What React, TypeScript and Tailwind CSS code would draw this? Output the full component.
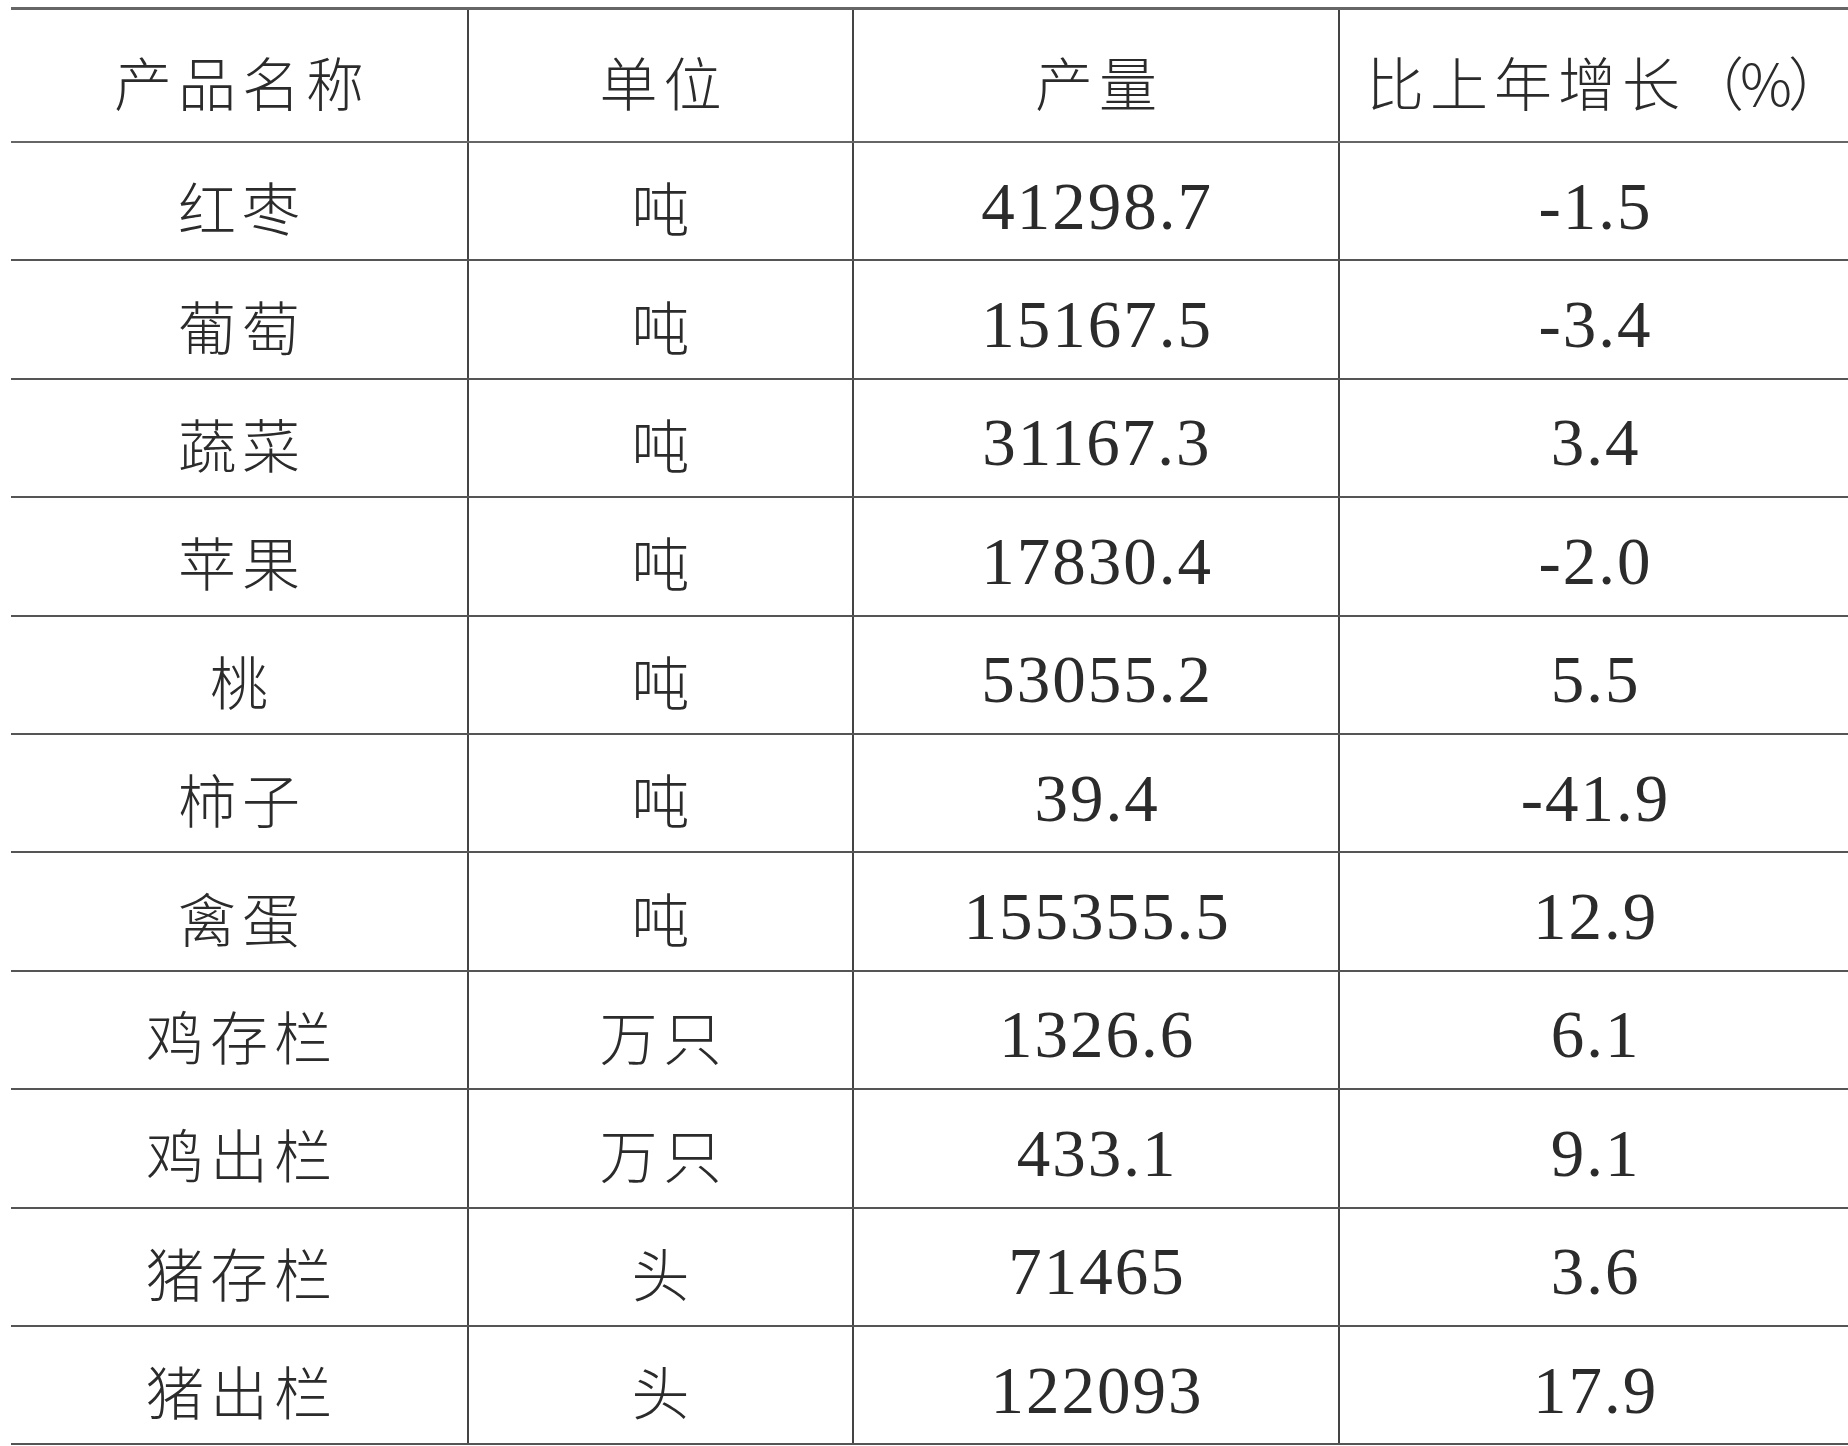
const rows: [string, string, string, string][] = [
  ["红枣", "吨", "41298.7", "-1.5"],
  ["葡萄", "吨", "15167.5", "-3.4"],
  ["蔬菜", "吨", "31167.3", "3.4"],
  ["苹果", "吨", "17830.4", "-2.0"],
  ["桃", "吨", "53055.2", "5.5"],
  ["柿子", "吨", "39.4", "-41.9"],
  ["禽蛋", "吨", "155355.5", "12.9"],
  ["鸡存栏", "万只", "1326.6", "6.1"],
  ["鸡出栏", "万只", "433.1", "9.1"],
  ["猪存栏", "头", "71465", "3.6"],
  ["猪出栏", "头", "122093", "17.9"],
];

const cjk = "font-['Noto_Sans_CJK_SC',sans-serif] font-light text-[58px] tracking-[6px] pl-[6px]";
const num = "font-['Liberation_Serif',serif] text-[67px] tracking-[2px] pl-[2px]";
const cell = "flex items-center justify-center pt-[10px] leading-none";
const grid = "grid grid-cols-[458px_385px_486px_509px]";

export default function App() {
  return (
    <div className="w-[1848px] h-[1446px] bg-white text-[#2b2b2b] pt-[7px] pl-[11px] overflow-hidden">
      <div className={`${grid} h-[136px] border-t-[3px] border-b-2 border-[#666]`}>
        <div className={`${cell} ${cjk} border-r-2 border-[#444]`}>产品名称</div>
        <div className={`${cell} ${cjk} border-r-2 border-[#444]`}>单位</div>
        <div className={`${cell} ${cjk} border-r-2 border-[#444]`}>产量</div>
        <div className={`${cell} ${cjk} justify-start !pl-[26px] whitespace-nowrap`}>
          比上年增长<span className="tracking-[-4px]">（%）</span>
        </div>
      </div>
      {rows.map((r) => (
        <div key={r[0]} className={`${grid} h-[118.4px] border-b-2 border-[#555]`}>
          <div className={`${cell} ${cjk} border-r-2 border-[#444]`}>{r[0]}</div>
          <div className={`${cell} ${cjk} border-r-2 border-[#444]`}>{r[1]}</div>
          <div className={`${cell} ${num} border-r-2 border-[#444]`}>{r[2]}</div>
          <div className={`${cell} ${num}`}>{r[3]}</div>
        </div>
      ))}
    </div>
  );
}
